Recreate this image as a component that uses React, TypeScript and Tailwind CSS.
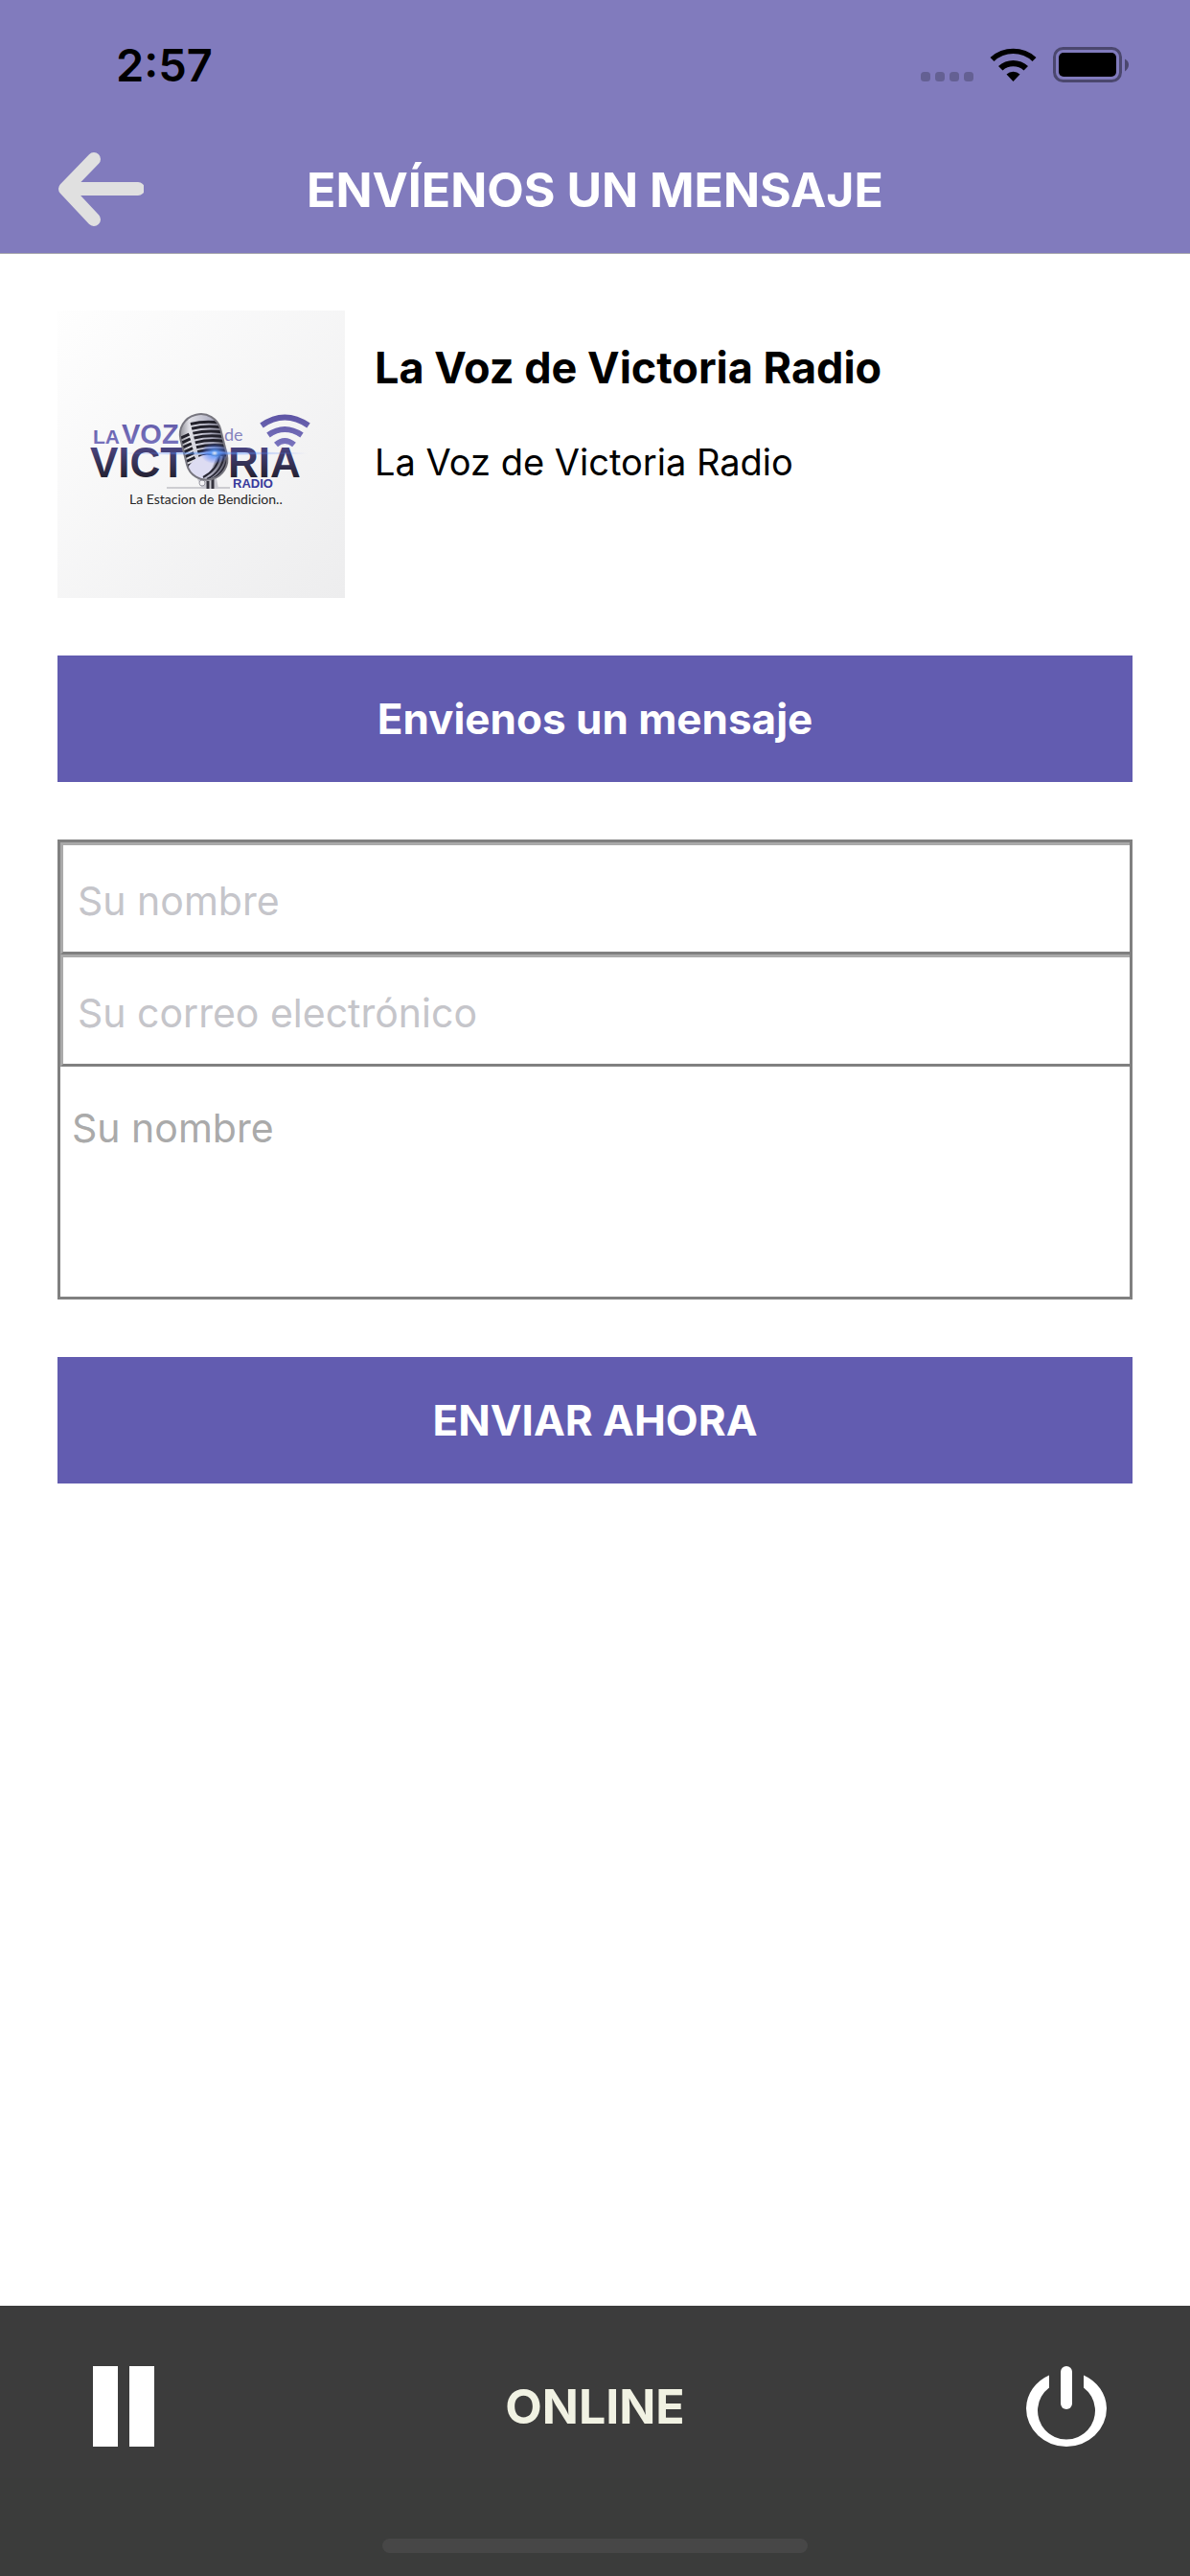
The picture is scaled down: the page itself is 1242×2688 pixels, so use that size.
import { useState } from "react";
import type { FormEvent } from "react";

const fields = [
  { id: "nombre", type: "text", placeholder: "Su nombre" },
  { id: "correo", type: "email", placeholder: "Su correo electrónico" },
];

// Slats of the microphone grille, top to bottom
const slats = [0, 1, 2, 3, 4, 5, 6, 7];

function StatusBar() {
  return (
    <div className="flex h-[132px] items-center justify-between pt-1 pr-16 pl-[121px]">
      <span className="text-[47px] leading-[60px] font-semibold text-black">2:57</span>
      <svg width="217" height="40" viewBox="0 0 217 40" aria-hidden>
        <g fill="#000" fillOpacity="0.22">
          <rect x="0" y="27" width="10" height="10" rx="3.5" />
          <rect x="15" y="27" width="10" height="10" rx="3.5" />
          <rect x="30" y="27" width="10" height="10" rx="3.5" />
          <rect x="45" y="27" width="10" height="10" rx="3.5" />
        </g>
        <path d="M72.500 12A35.500 35.500 0 0 1 120.500 12L116.500 16A29 29 0 0 0 76.500 16Z" />
        <path d="M81 21A23 23 0 0 1 112 21L107.500 25.500A16.500 16.500 0 0 0 85.500 25.500Z" />
        <path d="M89.500 29.500A10.500 10.500 0 0 1 103.500 29.500L96.500 37Z" />
        <rect x="139.500" y="2.500" width="69" height="34" rx="9" fill="none" stroke="#000" strokeOpacity="0.42" strokeWidth="3" />
        <rect x="144" y="7" width="60" height="25" rx="5" />
        <path d="M213 13.500Q217 15.500 217 19.500T213 26.500Z" fillOpacity="0.42" />
      </svg>
    </div>
  );
}

function StationLogo() {
  return (
    <svg className="size-[300px] shrink-0" viewBox="0 0 300 300" role="img" aria-label="La Voz de Victoria Radio">
      <defs>
        <linearGradient id="paper" x1="0" y1="0" x2="1" y2="1">
          <stop offset="0" stopColor="#fefefe" />
          <stop offset="1" stopColor="#ededee" />
        </linearGradient>
        <linearGradient id="violet" gradientUnits="userSpaceOnUse" x1="0" y1="108" x2="0" y2="142">
          <stop offset="0" stopColor="#5d54a4" />
          <stop offset="1" stopColor="#7974be" />
        </linearGradient>
        <linearGradient id="night" gradientUnits="userSpaceOnUse" x1="0" y1="142" x2="0" y2="175">
          <stop offset="0" stopColor="#4a4582" />
          <stop offset="1" stopColor="#232130" />
        </linearGradient>
        <linearGradient id="chrome" x1="0" y1="0" x2="1" y2="0">
          <stop offset="0" stopColor="#5d5d66" />
          <stop offset="0.25" stopColor="#e2e2e8" />
          <stop offset="0.6" stopColor="#b4b4c6" />
          <stop offset="1" stopColor="#33323d" />
        </linearGradient>
        <radialGradient id="glow">
          <stop offset="0" stopColor="#fff" />
          <stop offset="0.25" stopColor="#5a9cff" />
          <stop offset="1" stopColor="#4d6cff" stopOpacity="0" />
        </radialGradient>
        <clipPath id="head">
          <rect x="131" y="108" width="43" height="69" rx="21" transform="rotate(-14 152 142)" />
        </clipPath>
      </defs>
      <rect width="300" height="300" fill="url(#paper)" />

      <g className="font-['Liberation_Sans',sans-serif] font-bold">
        <text x="37" y="139" fontSize="21" fill="url(#violet)">LA</text>
        <text x="67" y="139" fontSize="29" fill="url(#violet)">VOZ</text>
        <text x="34" y="174" fontSize="44" fill="url(#night)">VICT</text>
        <text x="178" y="174" fontSize="44" fill="url(#night)">RIA</text>
        <text x="183" y="185" fontSize="13" fill="#37399b">RADIO</text>
      </g>
      <text x="174" y="136" fontSize="18" fill="#8583bd" className="font-['Lato',sans-serif]">de</text>
      <text x="75" y="202" fontSize="14" fill="#252525" className="font-['Lato',sans-serif]">
        La Estacion de Bendicion..
      </text>

      {/* Signal waves */}
      <g fill="none" stroke="url(#violet)">
        <path d="M213 120Q237 103 262 120" strokeWidth="6" />
        <path d="M220 130Q237 118 255 130" strokeWidth="6" />
        <path d="M228 140Q237 132 247 140" strokeWidth="6" />
      </g>

      {/* Microphone */}
      <path d="M114 185H180" stroke="#a5a5ad" />
      <path d="M145 174 151 186H168L165 170Z" fill="#c9c9d0" />
      <path d="M157 178V186M162 176V186" stroke="#34333d" strokeWidth="3" />
      <circle cx="151" cy="180" r="3" fill="#f4f4f6" stroke="#9a9aa3" />
      <g clipPath="url(#head)">
        <rect x="122" y="102" width="62" height="82" fill="url(#chrome)" />
        <g transform="rotate(-14 152 142)" fill="none" stroke="#22212b" strokeWidth="3">
          {slats.map((i) => (
            <path key={i} d={`M130 ${128 + i * 5}L141 ${126 + i * 5}M145 ${116 + i * 5}Q160 ${116 + i * 5} 175 ${122 + i * 5}`} />
          ))}
        </g>
        <path d="M137 162Q150 145 166 153L158 172Q148 178 139 174Z" fill="#dddcf2" />
        <path d="M156 176Q172 168 174 150M161 176Q176 168 178 150M152 174Q167 166 169 152" stroke="#2a2936" strokeWidth="2" fill="none" />
      </g>
      <rect x="131" y="108" width="43" height="69" rx="21" transform="rotate(-14 152 142)" fill="none" stroke="#77767f" strokeWidth="2" />
      <ellipse cx="164" cy="149" rx="100" ry="2" fill="url(#glow)" opacity="0.5" />
      <ellipse cx="164" cy="149" rx="15" ry="11" fill="url(#glow)" opacity="0.85" />
    </svg>
  );
}

export default function App() {
  const [playing, setPlaying] = useState(true);

  const handleSubmit = (e: FormEvent) => e.preventDefault();

  return (
    <div className="flex min-h-screen flex-col bg-white font-['Inter',sans-serif]">
      <header className="border-b border-[#a9a9ae] bg-[#817bbd]">
        <StatusBar />
        <div className="grid h-[132px] grid-cols-[90px_1fr_90px] items-center px-[60px]">
          <button type="button" aria-label="Volver">
            <svg width="90" height="80" viewBox="0 0 90 80" fill="none" stroke="#e0e0e0" strokeWidth="14" strokeLinecap="round" strokeLinejoin="round" aria-hidden>
              <path d="M38 8 8 39 38 71M14 39H84" />
            </svg>
          </button>
          <h1 className="text-center text-[50px] leading-[60px] font-bold text-white">
            ENVÍENOS UN MENSAJE
          </h1>
        </div>
      </header>

      <main className="flex grow flex-col gap-[60px] px-[60px] pt-[59px]">
        <section className="flex gap-[31px]">
          <StationLogo />
          <div className="flex flex-col gap-10 pt-[30px]">
            <h2 className="text-[45px] leading-[60px] font-bold text-black">La Voz de Victoria Radio</h2>
            <p className="text-[38px] leading-[56px] text-black">La Voz de Victoria Radio</p>
          </div>
        </section>

        <h2 className="bg-[#625cb0] py-9 text-center text-[44px] leading-[60px] font-bold text-white">
          Envienos un mensaje
        </h2>

        <form className="flex flex-col gap-[60px]" onSubmit={handleSubmit}>
          <div className="flex flex-col border-[3px] border-[#808080]">
            {fields.map((field) => (
              <input
                key={field.id}
                id={field.id}
                name={field.id}
                type={field.type}
                aria-label={field.placeholder}
                placeholder={field.placeholder}
                className="h-[117px] w-full border-t-[3px] border-b-[3px] border-l-[3px] border-t-[#aaaaaa] border-b-[#808080] border-l-[#aaaaaa] pt-1 pl-[15px] text-[41px] leading-[48px] text-black outline-none placeholder:text-[#c5c5ca]"
              />
            ))}
            <textarea
              id="mensaje"
              name="mensaje"
              aria-label="Mensaje"
              placeholder="Su nombre"
              className="block h-60 w-full resize-none px-3 pt-10 text-[41px] leading-[48px] text-black outline-none placeholder:text-[#aaaaaa]"
            />
          </div>
          <button type="submit" className="bg-[#625cb0] py-9 text-[44px] leading-[60px] font-bold text-white">
            ENVIAR AHORA
          </button>
        </form>
      </main>

      <footer>
        <div className="grid grid-cols-[84px_1fr_84px] items-center bg-[#3c3c3c] px-[87px] pt-[63px] pb-[33px]">
          <button type="button" aria-label={playing ? "Pausar" : "Reproducir"} onClick={() => setPlaying(!playing)}>
            <svg width="84" height="84" viewBox="0 0 84 84" fill="#fff" aria-hidden>
              {playing ? <path d="M10 0H36V84H10ZM48 0H74V84H48Z" /> : <path d="M10 0 74 42 10 84Z" />}
            </svg>
          </button>
          <p className="text-center text-[50px] leading-[60px] font-bold text-[#f1f2e3]">ONLINE</p>
          <button type="button" aria-label="Apagar">
            <svg width="84" height="84" viewBox="0 0 84 84" fill="#fff" aria-hidden>
              <rect x="36" y="0" width="12" height="45" rx="6" />
              <path d="M24 9.500V22.500A30 30 0 1 0 60 22.500V9.500A42 39 0 0 1 84 44A42 40 0 0 1 0 44A42 39 0 0 1 24 9.500Z" />
            </svg>
          </button>
        </div>
        <div className="flex h-[102px] items-end justify-center bg-[#3b3c3b] pb-6">
          <div className="h-[15px] w-[444px] rounded-full bg-[#474747]" />
        </div>
      </footer>
    </div>
  );
}
